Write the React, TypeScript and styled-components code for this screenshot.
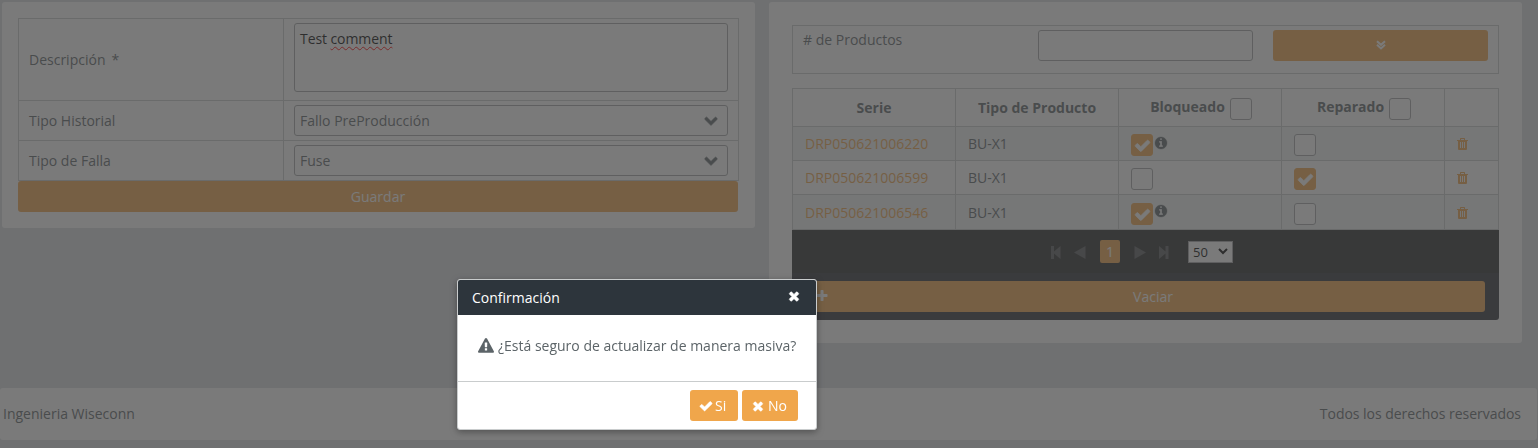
import React from 'react';
import styled, { createGlobalStyle, css } from 'styled-components';

const ORANGE = '#f0a64b';
const DARK = '#2d353c';
const LINE = '#c9cccd';

const GlobalStyle = createGlobalStyle`
  *, *::before, *::after { box-sizing: border-box; }
  body {
    margin: 0;
    background: #dadde2;
    color: #5c6468;
    font: 14px/19px 'Open Sans', sans-serif;
    overflow: hidden;
  }
`;

const icons = {
  check:
    'M1671 566q0 40-28 68l-724 724-136 136q-28 28-68 28t-68-28l-136-136-362-362q-28-28-28-68t28-68l136-136q28-28 68-28t68 28l294 295 656-657q28-28 68-28t68 28l136 136q28 28 28 68z',
  times:
    'M1490 1322q0 40-28 68l-136 136q-28 28-68 28t-68-28l-294-294-294 294q-28 28-68 28t-68-28l-136-136q-28-28-28-68t28-68l294-294-294-294q-28-28-28-68t28-68l136-136q28-28 68-28t68 28l294 294 294-294q28-28 68-28t68 28l136 136q28 28 28 68t-28 68l-294 294 294 294q28 28 28 68z',
  info:
    'M1152 1376v-160q0-14-9-23t-23-9h-96v-512q0-14-9-23t-23-9h-320q-14 0-23 9t-9 23v160q0 14 9 23t23 9h96v320h-96q-14 0-23 9t-9 23v160q0 14 9 23t23 9h448q14 0 23-9t9-23zm-128-896v-160q0-14-9-23t-23-9h-192q-14 0-23 9t-9 23v160q0 14 9 23t23 9h192q14 0 23-9t9-23zm640 416q0 209-103 385.5t-279.5 279.5-385.5 103-385.5-103-279.5-279.5-103-385.5 103-385.5 279.5-279.5 385.5-103 385.5 103 279.5 279.5 103 385.5z',
  warning:
    'M1024 1375v-190q0-14-9.5-23.5t-22.5-9.5h-192q-13 0-22.5 9.5t-9.5 23.5v190q0 14 9.5 23.5t22.5 9.5h192q13 0 22.5-9.5t9.5-23.5zm-2-374l18-459q0-12-10-19-13-11-24-11h-220q-11 0-24 11-10 7-10 21l17 457q0 10 10 16.5t24 6.5h185q14 0 23.5-6.5t10.5-16.5zm-14-934l768 1408q35 63-2 126-17 29-46.5 46t-63.5 17h-1536q-34 0-63.5-17t-46.5-46q-37-63-2-126l768-1408q17-31 47-49t65-18 65 18 47 49z',
  chevron:
    'M1683 808l-742 741q-19 19-45 19t-45-19l-742-741q-19-19-19-45.5t19-45.5l166-165q19-19 45-19t45 19l531 531 531-531q19-19 45-19t45 19l166 165q19 19 19 45.5t-19 45.5z',
  plus:
    'M1600 736v192q0 40-28 68t-68 28h-416v416q0 40-28 68t-68 28h-192q-40 0-68-28t-28-68v-416h-416q-40 0-68-28t-28-68v-192q0-40 28-68t68-28h416v-416q0-40 28-68t68-28h192q40 0 68 28t28 68v416h416q40 0 68 28t28 68z',
};

const Svg = styled.svg<{ $size: number; $lift: number; $bold: number }>`
  display: block;
  flex: none;
  width: ${(p) => p.$size}px;
  height: ${(p) => p.$size}px;
  margin-bottom: ${(p) => p.$lift * 2}px;
  fill: currentColor;
  stroke: currentColor;
  stroke-width: ${(p) => p.$bold};
  overflow: visible;
`;

interface IconProps {
  name: keyof typeof icons;
  size?: number;
  lift?: number;
  bold?: number;
}

const Icon = ({ name, size = 14, lift = 0, bold = 0 }: IconProps) => (
  <Svg $size={size} $lift={lift} $bold={bold} viewBox="0 0 1792 1792">
    <path d={icons[name]} />
  </Svg>
);

const Page = styled.div`
  height: 448px;
  display: flex;
  flex-direction: column;
`;

const Columns = styled.main`
  height: 388px;
  padding: 2px 16px 0 2px;
  display: flex;
  align-items: flex-start;
  justify-content: space-between;
`;

const Card = styled.section<{ $pad: string; $height: number }>`
  width: 753px;
  height: ${(p) => p.$height}px;
  padding: ${(p) => p.$pad};
  background: #fff;
  border-radius: 3px;
`;

const FormGrid = styled.div`
  width: 721px;
  border: 1px solid ${LINE};
`;

const FormRow = styled.div<{ $height: number }>`
  display: grid;
  grid-template-columns: 264px 1fr;
  height: ${(p) => p.$height}px;
  & + & { border-top: 1px solid ${LINE}; }
`;

const Label = styled.div`
  display: flex;
  align-items: center;
  gap: 6px;
  padding-left: 10px;
`;

const Field = styled.div`
  border-left: 1px solid ${LINE};
  padding: 4px 10px 0;
`;

const box = css`
  border: 1px solid #a3a6a7;
  border-radius: 3px;
  background: #fff;
`;

const TextArea = styled.div`
  ${box}
  height: 69px;
  padding: 5px;
  color: #000;
  letter-spacing: -0.08px;
`;

const Misspelled = styled.span`
  text-decoration: underline wavy #f00 1px;
  text-decoration-skip-ink: none;
  text-underline-offset: 2px;
`;

const Select = styled.div`
  ${box}
  height: 31px;
  padding: 0 9px 0 5px;
  display: flex;
  align-items: center;
  justify-content: space-between;
`;

const Button = styled.button<{ $width: string }>`
  display: flex;
  align-items: center;
  justify-content: center;
  width: ${(p) => p.$width};
  height: 31px;
  padding: 0;
  border: 0;
  border-radius: 3px;
  background: ${ORANGE};
  color: #fff;
  font: inherit;
`;

const Counter = styled.div`
  display: grid;
  grid-template-columns: 215px 215px 215px;
  column-gap: 20px;
  height: 49px;
  padding: 4px 10px 0;
  margin-bottom: 14px;
  border: 1px solid ${LINE};
`;

const DoubleArrow = styled.svg`
  display: block;
  width: 10px;
  height: 10px;
  margin-bottom: 1px;
  fill: none;
  stroke: currentColor;
  stroke-width: 2;
`;

const TextInput = styled.div`
  ${box}
  height: 31px;
`;

const Table = styled.div`
  border-right: 1px solid ${LINE};
  border-bottom: 1px solid ${LINE};
`;

const Row = styled.div<{ $height: number; $odd?: boolean }>`
  display: grid;
  grid-template-columns: repeat(4, 163px) 1fr;
  height: ${(p) => p.$height}px;
  background: ${(p) => (p.$odd ? '#f0f4f3' : '#fff')};
`;

const Cell = styled.div<{ $pad?: number }>`
  display: flex;
  align-items: flex-start;
  padding: ${(p) => p.$pad ?? 8}px 0 0 12px;
  border-left: 1px solid ${LINE};
  border-top: 1px solid ${LINE};
`;

const HeadCell = styled(Cell)<{ $shift?: number }>`
  padding: 0 0 0 ${(p) => p.$shift ?? 0}px;
  align-items: center;
  justify-content: center;
  gap: 5px;
  font-weight: 700;
  & > span:first-child { margin-bottom: 2px; }
  & > span:last-child { margin-top: 3px; }
`;

const Serial = styled.a`
  color: ${ORANGE};
`;

const Check = styled.span<{ $on?: boolean }>`
  ${box}
  display: flex;
  flex: none;
  align-items: center;
  justify-content: center;
  width: 22px;
  height: 22px;
  color: #fff;
  ${(p) => p.$on && `background: ${ORANGE}; border-color: ${ORANGE};`}
`;

const Info = styled.span<{ $top: number }>`
  margin: ${(p) => p.$top}px 0 0 1px;
`;

const TrashIcon = styled.svg`
  display: block;
  width: 11px;
  height: 12px;
  margin-top: 4px;
  fill: ${ORANGE};
`;

const Paginator = styled.div`
  display: flex;
  align-items: center;
  height: 43px;
  padding-left: 259px;
  background: #242627;
  color: #55595a;
`;

const PageArrow = styled.svg<{ $gap: number }>`
  display: block;
  flex: none;
  height: 13px;
  margin: 1px ${(p) => p.$gap}px 0 0;
  fill: currentColor;
`;

const PageNumber = styled.span`
  width: 20px;
  height: 23px;
  margin-right: 14px;
  border-radius: 2px;
  background: ${ORANGE};
  color: #fff;
  text-align: center;
  line-height: 24px;
`;

const PageSize = styled.span`
  display: flex;
  align-items: center;
  justify-content: space-between;
  width: 45px;
  height: 22px;
  padding: 1px 4px 0 4px;
  border: 1px solid #a3a6a7;
  background: #fff;
  color: #000;
  font-size: 13px;
  & > svg { margin-bottom: 1px; }
`;

const TableFooter = styled.div`
  height: 47px;
  padding: 8px 14px;
  background: #2b2d35;
  border-radius: 0 0 3px 3px;
`;

const IconButton = styled(Button)`
  justify-content: flex-start;
  padding-left: 9px;
  & > span { flex: 1; padding-right: 8px; text-align: center; }
`;

const Footer = styled.footer`
  display: flex;
  align-items: center;
  justify-content: space-between;
  width: 1537px;
  height: 52px;
  padding: 0 16px 1px 3px;
  background: #fff;
  border-radius: 3px;
`;

const Rights = styled.span`
  letter-spacing: -0.03px;
`;

const Mask = styled.div`
  position: fixed;
  inset: 0;
  background: rgba(66, 66, 66, 0.7);
`;

const Dialog = styled.div`
  position: fixed;
  left: 457px;
  top: 279px;
  width: 360px;
  height: 151px;
  border: 1px solid #c9cccd;
  border-radius: 3px;
  background: #fff;
  box-shadow: 0 2px 7px rgba(0, 0, 0, 0.35);
`;

const DialogTitle = styled.header`
  display: flex;
  align-items: center;
  justify-content: space-between;
  height: 35px;
  padding: 0 15px 0 14px;
  border-radius: 2px 2px 0 0;
  background: ${DARK};
  color: #fff;
`;

const Message = styled.div`
  display: flex;
  align-items: center;
  gap: 4px;
  height: 66px;
  padding: 0 0 5px 20px;
`;

const Actions = styled.div`
  display: flex;
  justify-content: flex-end;
  gap: 4px;
  padding: 8px 18px 0 0;
  border-top: 1px solid #c9cccd;
`;

const ActionButton = styled(Button)<{ $gap: number }>`
  justify-content: flex-start;
  padding-left: 9px;
  gap: ${(p) => p.$gap}px;
`;

const rows = [
  { serial: 'DRP050621006220', locked: true, fixed: false, height: 34, extra: 0 },
  { serial: 'DRP050621006599', locked: false, fixed: true, height: 34, extra: 0 },
  { serial: 'DRP050621006546', locked: true, fixed: false, height: 35, extra: 1 },
];

const CheckBox = ({ on }: { on?: boolean }) => (
  <Check $on={on}>{on && <Icon name="check" size={17} bold={70} />}</Check>
);

export default function App() {
  return (
    <>
      <GlobalStyle />
      <Page>
        <Columns>
          <Card $pad="16px" $height={226}>
            <FormGrid>
              <FormRow $height={81}>
                <Label>
                  Descripción <span>*</span>
                </Label>
                <Field>
                  <TextArea>
                    Test <Misspelled>comment</Misspelled>
                  </TextArea>
                </Field>
              </FormRow>
              <FormRow $height={40}>
                <Label>Tipo Historial</Label>
                <Field>
                  <Select>
                    Fallo PreProducción <Icon name="chevron" lift={1} bold={90} />
                  </Select>
                </Field>
              </FormRow>
              <FormRow $height={40}>
                <Label>Tipo de Falla</Label>
                <Field>
                  <Select>
                    Fuse <Icon name="chevron" lift={1} bold={90} />
                  </Select>
                </Field>
              </FormRow>
            </FormGrid>
            <Button $width="720px">Guardar</Button>
          </Card>

          <Card $pad="23px" $height={341}>
            <Counter>
              <label># de Productos</label>
              <TextInput />
              <Button $width="215px">
                <DoubleArrow viewBox="0 0 10 10">
                  <path d="M1 1.2 5 4.8 9 1.2M1 4.8 5 8.4 9 4.8" />
                </DoubleArrow>
              </Button>
            </Counter>
            <Table>
              <Row $height={38}>
                <HeadCell>Serie</HeadCell>
                <HeadCell>Tipo de Producto</HeadCell>
                <HeadCell $shift={2}>
                  <span>Bloqueado</span>
                  <CheckBox />
                </HeadCell>
                <HeadCell $shift={2}>
                  <span>Reparado</span>
                  <CheckBox />
                </HeadCell>
                <HeadCell />
              </Row>
              {rows.map((r) => (
                <Row key={r.serial} $height={r.height} $odd={r.locked}>
                  <Cell $pad={7 + r.extra}>
                    <Serial>{r.serial}</Serial>
                  </Cell>
                  <Cell $pad={7 + r.extra}>BU-X1</Cell>
                  <Cell $pad={7 + r.extra}>
                    <CheckBox on={r.locked} />
                    {r.locked && (
                      <Info $top={2 - r.extra}>
                        <Icon name="info" bold={40} />
                      </Info>
                    )}
                  </Cell>
                  <Cell $pad={7 + r.extra}>
                    <CheckBox on={r.fixed} />
                  </Cell>
                  <Cell $pad={7 + r.extra}>
                    <TrashIcon viewBox="0 0 11 12">
                      <path
                        fillRule="evenodd"
                        d="M3 2V.7Q3 0 3.700 0H7.300Q8 0 8 .7V2H11V3H10V11Q10 12 9 12H2Q1 12 1 11V3H0V2ZM4 1V2H7V1ZM3 4V10H4V4ZM5 4V10H6V4ZM7 4V10H8V4Z"
                      />
                    </TrashIcon>
                  </Cell>
                </Row>
              ))}
            </Table>
            <Paginator>
              <PageArrow $gap={12} width="11" viewBox="0 0 11 13">
                <path d="M0 0h3v5.500L9.500 0v13L3 7.500V13H0z" />
              </PageArrow>
              <PageArrow $gap={14} width="12" viewBox="0 0 12 13">
                <path d="M0 6.500 11.500 0v13z" />
              </PageArrow>
              <PageNumber>1</PageNumber>
              <PageArrow $gap={13} width="12" viewBox="0 0 12 13">
                <path d="M12 6.500 .5 0v13z" />
              </PageArrow>
              <PageArrow $gap={19} width="10" viewBox="0 0 10 13">
                <path d="M9.500 0H6.500v5.500L0 0v13l6.500-5.500V13H9.500z" />
              </PageArrow>
              <PageSize>
                50
                <svg width="10" height="7" viewBox="0 0 10 7" fill="none" stroke="currentColor" strokeWidth="2">
                  <path d="M1 1l4 4 4-4" />
                </svg>
              </PageSize>
            </Paginator>
            <TableFooter>
              <IconButton $width="679px">
                <Icon name="plus" lift={1} />
                <span>Vaciar</span>
              </IconButton>
            </TableFooter>
          </Card>
        </Columns>
        <Footer>
          <span>Ingenieria Wiseconn</span>
          <Rights>Todos los derechos reservados</Rights>
        </Footer>
      </Page>
      <Mask />
      <Dialog>
        <DialogTitle>
          Confirmación
          <Icon name="times" lift={1.5} bold={80} />
        </DialogTitle>
        <Message>
          <Icon name="warning" size={16} />
          ¿Está seguro de actualizar de manera masiva?
        </Message>
        <Actions>
          <ActionButton $width="48px" $gap={2}>
            <Icon name="check" bold={70} />
            Si
          </ActionButton>
          <ActionButton $width="56px" $gap={3}>
            <Icon name="times" bold={70} />
            No
          </ActionButton>
        </Actions>
      </Dialog>
    </>
  );
}
